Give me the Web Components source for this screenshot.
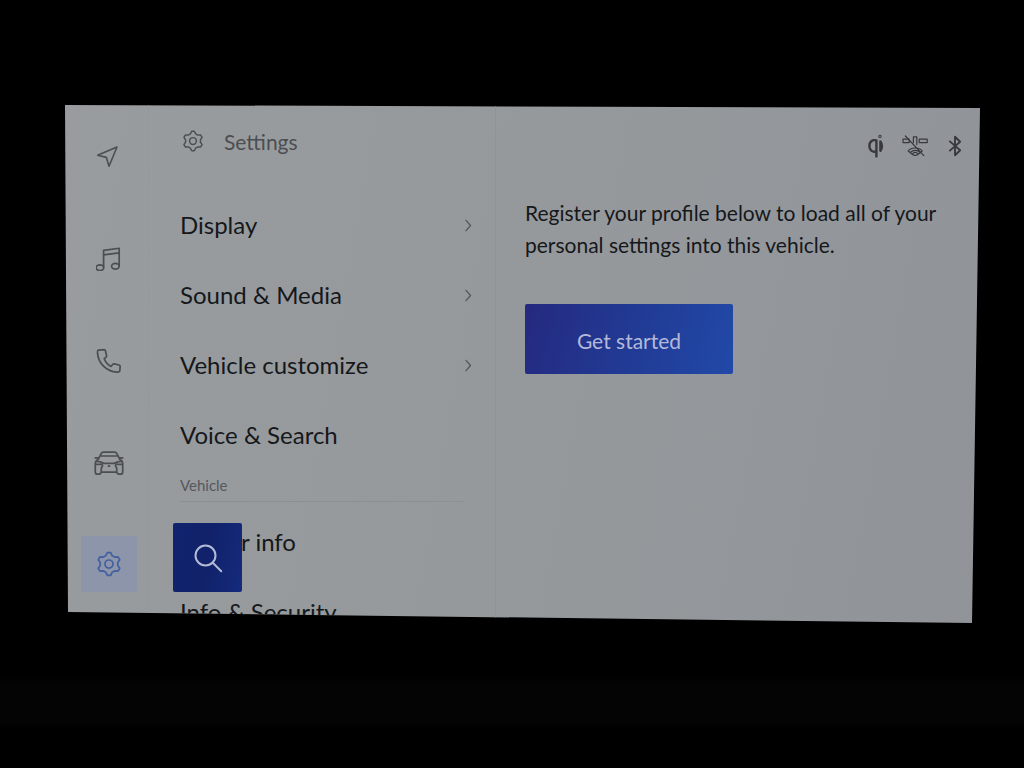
<!DOCTYPE html>
<html lang="en">
<head>
<meta charset="utf-8">
<meta name="viewport" content="width=device-width, initial-scale=1">
<title>Settings</title>
<style>
    body {
        margin: 0;
        background: #000;
        font-family: Lato, "Open Sans", sans-serif;
        color: #15181b;
    }
</style>
</head>
<body>
<head-unit>
    <nav-rail slot="rail">
        <rail-item icon="navigate" label="Navigation"></rail-item>
        <rail-item icon="music" label="Music"></rail-item>
        <rail-item icon="phone" label="Phone"></rail-item>
        <rail-item icon="car" label="Vehicle"></rail-item>
        <rail-item icon="gear" label="Settings" active></rail-item>
    </nav-rail>
    <settings-menu slot="menu" heading="Settings">
        <menu-row more>Display</menu-row>
        <menu-row more>Sound &amp; Media</menu-row>
        <menu-row more>Vehicle customize</menu-row>
        <menu-row>Voice &amp; Search</menu-row>
        <menu-section>Vehicle</menu-section>
        <menu-row>Dealer info</menu-row>
        <menu-row>Info &amp; Security</menu-row>
    </settings-menu>
    <profile-panel slot="panel">
        <status-bar slot="status"></status-bar>
        Register your profile below to load all of your personal settings into this vehicle.
        <span slot="action">Get started</span>
    </profile-panel>
</head-unit>

<script>
const icons = {
    navigate: `<path d="M.6 11.2 20 3 12 22.2 9.4 13.4z"/>`,
    music: `<path d="M7 20.2V5L21.4 3V19M7 9.2 21.4 7.2"/>
        <ellipse cx="3.6" cy="21" rx="3.5" ry="2.6"/><ellipse cx="17.9" cy="19.6" rx="3.5" ry="2.6"/>`,
    phone: `<path d="M2.2 2.9Q1.2 3.1 1.4 5.4C1.9 14.9 9.6 22.6 19.4 23.1Q21.8 23.2 22 21.8L22.3 17.9Q22.3 16.9 21.3 16.6L16.9 15.6Q16 15.4 15.4 16.1L13.8 17.9C11.3 16.6 8.6 13.4 7.6 10.8L9.3 9.3Q9.9 8.7 9.7 7.9L8.7 3.4Q8.5 2.5 7.5 2.5z"/>`,
    car: `<path d="M4 10.4 6.8 5Q7.4 3.8 8.8 3.8H19.2Q20.6 3.8 21.2 5L24 10.4M6.2 7.4H21.8M4 9.2H1.2M24 9.2H26.8"/>
        <path d="M4 10.4C2.4 11.2 1.2 12.6 1.2 14.4V22Q1.2 24.4 3 24.4H4.4Q6.4 24.4 6.8 22.4H21.2Q21.6 24.4 23.6 24.4H25Q26.8 24.4 26.8 22V14.4C26.8 12.6 25.6 11.2 24 10.4"/>
        <path d="M2.2 12.4C5.6 12.2 8 14 9.6 14.2H18.4C20 14 22.4 12.2 25.8 12.4M1.6 15.2H6.8Q8.4 15.4 7.8 17.2L6.8 18.6V22.4M26.4 15.2H21.2Q19.6 15.4 20.2 17.2L21.2 18.6V22.4M13.4 16.8H14.6"/>`,
    gear: `<path d="M10.6 1.4H13.4L14.9 4.3 17.2 5.6 20.4 5.5 21.9 8 20.1 10.7V13.3L21.9 16 20.4 18.5 17.2 18.4 14.9 19.7 13.4 22.6H10.6L9.1 19.7 6.8 18.4 3.6 18.5 2.1 16 3.9 13.3V10.7L2.1 8 3.6 5.5 6.8 5.6 9.1 4.3z"/>
        <circle cx="12" cy="12" r="3.7"/>`,
    search: `<circle cx="10" cy="10" r="8"/><path d="M15.8 15.8 22.6 22.6"/>`,
    chevron: `<path d="M9.6 6.4 15 12.6 9.6 18.8"/>`,
    bluetooth: `<path d="M6.4 7 17.6 16.6 12 22V2L17.6 7.4 6.4 17"/>`,
    qi: `<path d="M13.4 6.4C9 5.2 6.4 8 6.4 12S9 18.6 13.4 17.6M13.4 6.4V22.4M17.4 7.4C19.2 10 19.2 14 17.4 16.8z"/>
        <circle cx="17" cy="2.4" r=".5"/>`,
    sensor: `<path d="M1 7.6V4.2H7.2V7.6zM11.4 7.6V1.8H14.8V9.6M17.2 4.2H25.2V7.6H17.2z"/>
        <path d="M3.4 1 21.8 20.6M6.2 16C9 12 17.4 12 20.2 16L16.2 19.2C14.6 20.4 11.8 20.4 10.2 19.2zM8.4 17.4C11 14.6 15.4 14.6 18 17.4M10.4 18.8C12 17 14.4 17 16 18.8"/>`
};

const boxes = {
    car: "0 0 28 26",
    sensor: "0 0 26 22",
    bluetooth: "-1 -1 26 26"
};

class UiIcon extends HTMLElement {
    constructor() {
        super();
        this.attachShadow({ mode: "open" });
    }

    connectedCallback() {
        const name = this.getAttribute("name");
        this.shadowRoot.innerHTML = `
            <style>
                :host {
                    display: inline-flex;
                    width: 24px;
                    height: 24px;
                }
                svg {
                    width: 100%;
                    height: 100%;
                    fill: none;
                    stroke: currentColor;
                    stroke-width: var(--stroke, 1.6);
                    stroke-linejoin: round;
                    stroke-linecap: round;
                }
            </style>
            <svg viewBox="${boxes[name] || "0 0 24 24"}" aria-hidden="true">${icons[name]}</svg>
        `;
    }
}

const unitTemplate = document.createElement("template");
unitTemplate.innerHTML = `
    <style>
        :host {
            display: grid;
            box-sizing: border-box;
            height: 100vh;
            min-height: 640px;
            padding: 105px 44px 145px 65px;
            background: linear-gradient(#000 88%, #040404 89%, #040404 94%, #000 95%);
        }
        /* the glass is seen slightly from one side, so its edges are not square */
        main {
            display: grid;
            grid-template-columns: 84px 347px 1fr;
            grid-template-rows: minmax(0, 1fr);
            overflow: hidden;
            background: linear-gradient(100deg, #999c9f, #96999c 50%, #909499);
            clip-path: polygon(0 0, 100% 3px, calc(100% - 8px) 100%, 3px calc(100% - 11px));
        }
    </style>

    <main>
        <slot name="rail"></slot>
        <slot name="menu"></slot>
        <slot name="panel"></slot>
    </main>
`;

class HeadUnit extends HTMLElement {
    constructor() {
        super();
        this.attachShadow({ mode: "open" });
        this.shadowRoot.appendChild(unitTemplate.content.cloneNode(true));
    }
}

const railTemplate = document.createElement("template");
railTemplate.innerHTML = `
    <style>
        :host {
            display: block;
            border-right: 1px solid #94989b;
        }
        nav {
            display: flex;
            flex-direction: column;
            gap: 46px;
            padding: 23px 0 0 16px;
        }
    </style>

    <nav aria-label="Main"><slot></slot></nav>
`;

class NavRail extends HTMLElement {
    constructor() {
        super();
        this.attachShadow({ mode: "open" });
        this.shadowRoot.appendChild(railTemplate.content.cloneNode(true));
    }
}

const railItemTemplate = document.createElement("template");
railItemTemplate.innerHTML = `
    <style>
        :host {
            display: block;
            color: #4b4e52;
        }
        button {
            display: grid;
            place-items: center;
            width: 56px;
            height: 56px;
            padding: 0;
            border: 0;
            border-radius: 2px;
            background: none;
            color: inherit;
        }
        ui-icon {
            width: 26px;
            height: 26px;
        }
        ui-icon[name="navigate"] {
            width: 24px;
            height: 24px;
        }
        ui-icon[name="car"] {
            width: 30px;
            height: 28px;
        }
        :host([active]) {
            color: #4560a0;
        }
        :host([active]) button {
            background: #8c95aa;
        }
    </style>

    <button type="button"><ui-icon></ui-icon></button>
`;

class RailItem extends HTMLElement {
    constructor() {
        super();
        const content = railItemTemplate.content.cloneNode(true);
        content.querySelector("ui-icon").setAttribute("name", this.getAttribute("icon"));
        content.querySelector("button").setAttribute("aria-label", this.getAttribute("label"));

        this.attachShadow({ mode: "open" });
        this.shadowRoot.appendChild(content);
    }
}

const menuTemplate = document.createElement("template");
menuTemplate.innerHTML = `
    <style>
        :host {
            display: block;
            position: relative;
            box-sizing: border-box;
            overflow: hidden;
            border-right: 1px solid #8f9397;
        }
        header {
            display: flex;
            align-items: center;
            gap: 20px;
            height: 72px;
            margin-bottom: 13px;
            padding-left: 33px;
            color: #4b4e52;
        }
        header ui-icon {
            width: 22px;
            height: 22px;
        }
        h1 {
            margin: 0;
            font-size: 21px;
            font-weight: 400;
        }
        .list {
            padding: 0 31px;
        }
        .search {
            position: absolute;
            left: 24px;
            bottom: 31px;
            display: grid;
            place-items: center;
            width: 69px;
            height: 69px;
            padding: 0;
            border: 0;
            border-radius: 2px;
            background: linear-gradient(100deg, #12236f, #11226a 50%, #142a7c);
            color: #b4bbd6;
        }
        .search ui-icon {
            width: 30px;
            height: 30px;
        }
    </style>

    <header>
        <ui-icon name="gear"></ui-icon>
        <h1></h1>
    </header>
    <div class="list"><slot></slot></div>
    <button class="search" type="button" aria-label="Search"><ui-icon name="search"></ui-icon></button>
`;

class SettingsMenu extends HTMLElement {
    constructor() {
        super();
        this.attachShadow({ mode: "open" });
        this.shadowRoot.appendChild(menuTemplate.content.cloneNode(true));
        this.shadowRoot.querySelector("h1").textContent = this.getAttribute("heading");
    }
}

const rowTemplate = document.createElement("template");
rowTemplate.innerHTML = `
    <style>
        :host {
            display: block;
        }
        button {
            display: flex;
            align-items: center;
            justify-content: space-between;
            width: 100%;
            height: 70px;
            padding: 0;
            border: 0;
            background: none;
            color: inherit;
            font: 24px/32px Lato, "Open Sans", sans-serif;
            text-align: left;
        }
        ui-icon {
            display: none;
            width: 20px;
            height: 20px;
            margin-right: -14px;
            color: #54585c;
        }
        :host([more]) ui-icon {
            display: inline-flex;
        }
    </style>

    <button type="button"><slot></slot><ui-icon name="chevron"></ui-icon></button>
`;

class MenuRow extends HTMLElement {
    constructor() {
        super();
        this.attachShadow({ mode: "open" });
        this.shadowRoot.appendChild(rowTemplate.content.cloneNode(true));
    }
}

const sectionTemplate = document.createElement("template");
sectionTemplate.innerHTML = `
    <style>
        :host {
            display: block;
            margin-bottom: 5px;
            padding: 5px 0 6px;
            border-bottom: 1px solid #8c9094;
        }
        h2 {
            margin: 0;
            color: #55585c;
            font-size: 15px;
            font-weight: 400;
            line-height: 20px;
        }
    </style>

    <h2><slot></slot></h2>
`;

class MenuSection extends HTMLElement {
    constructor() {
        super();
        this.attachShadow({ mode: "open" });
        this.shadowRoot.appendChild(sectionTemplate.content.cloneNode(true));
    }
}

const panelTemplate = document.createElement("template");
panelTemplate.innerHTML = `
    <style>
        :host {
            display: block;
            padding: 0 16px 0 29px;
        }
        p {
            max-width: 430px;
            margin: 0 0 43px;
            font-size: 21px;
            line-height: 32px;
        }
        button {
            width: 208px;
            height: 70px;
            padding: 4px 0 0;
            border: 0;
            border-radius: 2px;
            background: linear-gradient(105deg, #25297f, #213a94 50%, #2149a8);
            color: #b3b9da;
            font: 21px/28px Lato, "Open Sans", sans-serif;
        }
    </style>

    <slot name="status"></slot>
    <p><slot></slot></p>
    <button type="button"><slot name="action"></slot></button>
`;

class ProfilePanel extends HTMLElement {
    constructor() {
        super();
        this.attachShadow({ mode: "open" });
        this.shadowRoot.appendChild(panelTemplate.content.cloneNode(true));
    }
}

const statusTemplate = document.createElement("template");
statusTemplate.innerHTML = `
    <style>
        :host {
            display: flex;
            align-items: center;
            justify-content: flex-end;
            gap: 15px;
            height: 82px;
            margin-bottom: 10px;
            margin-right: -3px;
            color: #37393d;
        }
        ui-icon[name="qi"] {
            --stroke: 2.4;
        }
        ui-icon[name="sensor"] {
            width: 26px;
            --stroke: 1.2;
        }
        ui-icon[name="bluetooth"] {
            --stroke: 2;
        }
    </style>

    <ui-icon name="qi"></ui-icon>
    <ui-icon name="sensor"></ui-icon>
    <ui-icon name="bluetooth"></ui-icon>
`;

class StatusBar extends HTMLElement {
    constructor() {
        super();
        this.attachShadow({ mode: "open" });
        this.shadowRoot.appendChild(statusTemplate.content.cloneNode(true));
    }
}

window.customElements.define("ui-icon", UiIcon);
window.customElements.define("head-unit", HeadUnit);
window.customElements.define("nav-rail", NavRail);
window.customElements.define("rail-item", RailItem);
window.customElements.define("settings-menu", SettingsMenu);
window.customElements.define("menu-row", MenuRow);
window.customElements.define("menu-section", MenuSection);
window.customElements.define("profile-panel", ProfilePanel);
window.customElements.define("status-bar", StatusBar);
</script>
</body>
</html>
